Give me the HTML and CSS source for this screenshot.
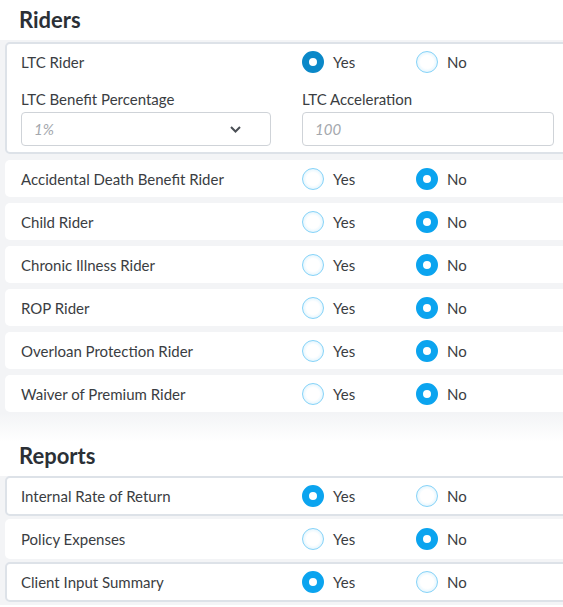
FILE: index.html
```html
<!DOCTYPE html>
<html>
<head>
<meta charset="utf-8">
<link rel="stylesheet" href="styles.css">
</head>
<body>
<div class="page">
  <h2 class="title">Riders</h2>
  <div class="section">
    <div class="card card--active card--ltc">
      <div class="row">
        <span class="label">LTC Rider</span>
        <label class="opt"><span class="radio radio--on radio--dark"></span>Yes</label>
        <label class="opt"><span class="radio"></span>No</label>
      </div>
      <div class="fields">
        <div class="field">
          <div class="field-label">LTC Benefit Percentage</div>
          <div class="select">
            <span class="ph">1%</span>
            <svg class="chev" width="11" height="7" viewBox="0 0 11 7"><path d="M1 1 L5.5 5.5 L10 1" fill="none" stroke="#4a4f55" stroke-width="2"/></svg>
          </div>
        </div>
        <div class="field">
          <div class="field-label">LTC Acceleration</div>
          <div class="input"><span class="ph">100</span></div>
        </div>
      </div>
    </div>
    <div class="card"><div class="row"><span class="label">Accidental Death Benefit Rider</span><label class="opt"><span class="radio"></span>Yes</label><label class="opt"><span class="radio radio--on"></span>No</label></div></div>
    <div class="card"><div class="row"><span class="label">Child Rider</span><label class="opt"><span class="radio"></span>Yes</label><label class="opt"><span class="radio radio--on"></span>No</label></div></div>
    <div class="card"><div class="row"><span class="label">Chronic Illness Rider</span><label class="opt"><span class="radio"></span>Yes</label><label class="opt"><span class="radio radio--on"></span>No</label></div></div>
    <div class="card"><div class="row"><span class="label">ROP Rider</span><label class="opt"><span class="radio"></span>Yes</label><label class="opt"><span class="radio radio--on"></span>No</label></div></div>
    <div class="card"><div class="row"><span class="label">Overloan Protection Rider</span><label class="opt"><span class="radio"></span>Yes</label><label class="opt"><span class="radio radio--on"></span>No</label></div></div>
    <div class="card"><div class="row"><span class="label">Waiver of Premium Rider</span><label class="opt"><span class="radio"></span>Yes</label><label class="opt"><span class="radio radio--on"></span>No</label></div></div>
  </div>
  <div class="fade"></div>
  <h2 class="title title--reports">Reports</h2>
  <div class="section section--reports">
    <div class="card card--active card--rep"><div class="row"><span class="label">Internal Rate of Return</span><label class="opt"><span class="radio radio--on"></span>Yes</label><label class="opt"><span class="radio"></span>No</label></div></div>
    <div class="card card--rep"><div class="row"><span class="label">Policy Expenses</span><label class="opt"><span class="radio"></span>Yes</label><label class="opt"><span class="radio radio--on"></span>No</label></div></div>
    <div class="card card--active card--rep"><div class="row"><span class="label">Client Input Summary</span><label class="opt"><span class="radio radio--on"></span>Yes</label><label class="opt"><span class="radio"></span>No</label></div></div>
  </div>
</div>
</body>
</html>
```

FILE: styles.css
```css
html, body {
  margin: 0;
  padding: 0;
  background: #ffffff;
  overflow: hidden;
}
.page {
  width: 563px;
  height: 607px;
  overflow: hidden;
  font-family: Lato, "Open Sans", sans-serif;
  color: #3a3d42;
  font-size: 15px;
}
.title {
  margin: 0;
  height: 40px;
  padding: 6px 0 0 19px;
  box-sizing: border-box;
  font-size: 22px;
  line-height: 28px;
  font-weight: 700;
  color: #2b3036;
}
.title--reports {
  height: 34px;
  padding-top: 0;
}
.section {
  background: #f3f4f6;
  padding: 2px 0 1px 5px;
  display: flex;
  flex-direction: column;
  gap: 6px;
  width: 640px;
}
.section--reports {
  gap: 3px;
  padding-top: 0;
  padding-bottom: 3px;
}
.fade {
  height: 29px;
  width: 640px;
  background: linear-gradient(#f3f4f6, #ffffff);
}
.card {
  background: #ffffff;
  border: 2px solid transparent;
  border-radius: 5px;
  padding: 0 14px;
  box-sizing: border-box;
}
.card--active {
  border-color: #dde2e8;
}
.row {
  display: flex;
  align-items: center;
  height: 33px;
}
.card--rep .row {
  height: 36px;
}
.card--ltc .row {
  height: 36px;
}
.label {
  width: 281px;
  flex: none;
}
.opt {
  display: flex;
  align-items: center;
  gap: 9px;
  width: 114px;
  flex: none;
}
.radio {
  width: 22px;
  height: 22px;
  border-radius: 50%;
  box-sizing: border-box;
  border: 1px solid #86d3f8;
  background: radial-gradient(circle, #ffffff 45%, #d8f1fd 85%, #b9e6fb 100%);
  flex: none;
}
.radio--on {
  border: 7px solid #0ba4ef;
  background: #ffffff;
}
.radio--dark {
  border-color: #0a88c8;
}
.fields {
  display: flex;
  margin-top: 9px;
  padding-bottom: 6px;
}
.field {
  flex: none;
}
.field:first-child {
  width: 281px;
}
.field-label {
  line-height: 20px;
  margin-bottom: 3px;
}
.select, .input {
  height: 34px;
  box-sizing: border-box;
  border: 1px solid #cfd3d8;
  border-radius: 4px;
  display: flex;
  align-items: center;
  padding: 0 12px;
  justify-content: space-between;
}
.select {
  width: 250px;
  padding-right: 29px;
}
.input {
  width: 252px;
}
.ph {
  font-style: italic;
  color: #a3a7ad;
  font-size: 15px;
}
.chev {
  display: block;
}
```
